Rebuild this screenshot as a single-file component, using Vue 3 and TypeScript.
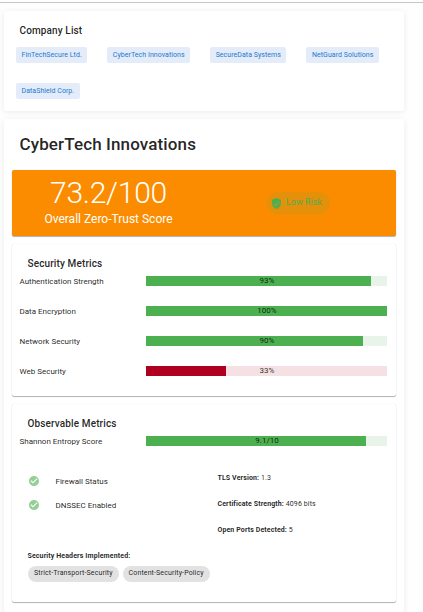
<script setup lang="ts">
interface Metric {
  label: string
  value: number
  text: string
  tone: 'good' | 'bad'
}

const companies: string[] = [
  'FinTechSecure Ltd.',
  'CyberTech Innovations',
  'SecureData Systems',
  'NetGuard Solutions',
  'DataShield Corp.',
]

const securityMetrics: Metric[] = [
  { label: 'Authentication Strength', value: 93.3, text: '93%', tone: 'good' },
  { label: 'Data Encryption', value: 100, text: '100%', tone: 'good' },
  { label: 'Network Security', value: 90, text: '90%', tone: 'good' },
  { label: 'Web Security', value: 33.2, text: '33%', tone: 'bad' },
]

const entropy: Metric = { label: 'Shannon Entropy Score', value: 91.3, text: '9.1/10', tone: 'good' }

const checks: string[] = ['Firewall Status', 'DNSSEC Enabled']

const facts = [
  { name: 'TLS Version:', value: '1.3' },
  { name: 'Certificate Strength:', value: '4096 bits' },
  { name: 'Open Ports Detected:', value: '5' },
]

const headers: string[] = ['Strict-Transport-Security', 'Content-Security-Policy']
</script>

<template>
  <div class="page">
    <div class="divider"></div>
    <section class="panel companies">
      <h2 class="card-title">Company List</h2>
      <div class="company-chips">
        <span v-for="c in companies" :key="c" class="company-chip">{{ c }}</span>
      </div>
    </section>

    <section class="panel detail">
      <h1 class="name">CyberTech Innovations</h1>

      <div class="card score">
        <div class="score-main">
          <div class="score-value">73.2/100</div>
          <div class="score-label">Overall Zero-Trust Score</div>
        </div>
        <div class="score-side">
          <span class="risk">
            <svg class="risk-icon" viewBox="3 1 18 22"><path fill="currentColor" d="M12 1L3 5v6c0 5.550 3.840 10.740 9 12 5.160-1.260 9-6.450 9-12V5l-9-4z" /><path class="risk-tick" d="M7.200 12.800l3 3 6.600-6.600" /></svg>
            <span class="risk-text">Low Risk</span>
          </span>
        </div>
      </div>

      <div class="card security">
        <h3 class="card-title inner">Security Metrics</h3>
        <div v-for="m in securityMetrics" :key="m.label" class="metric">
          <span class="metric-label">{{ m.label }}</span>
          <div class="bar" :class="m.tone">
            <div class="fill" :style="{ width: m.value + '%' }"></div>
            <span class="bar-text">{{ m.text }}</span>
          </div>
        </div>
      </div>

      <div class="card observable">
        <h3 class="card-title inner">Observable Metrics</h3>
        <div class="metric">
          <span class="metric-label">{{ entropy.label }}</span>
          <div class="bar" :class="entropy.tone">
            <div class="fill" :style="{ width: entropy.value + '%' }"></div>
            <span class="bar-text">{{ entropy.text }}</span>
          </div>
        </div>
        <div class="columns">
          <ul class="checks">
            <li v-for="c in checks" :key="c" class="check">
              <svg class="check-icon" viewBox="0 0 24 24"><path fill="currentColor" d="M12 2C6.5 2 2 6.5 2 12s4.5 10 10 10 10-4.500 10-10S17.500 2 12 2m-2 15l-5-5 1.410-1.410L10 14.170l7.590-7.590L19 8l-9 9z" /></svg>
              <span>{{ c }}</span>
            </li>
          </ul>
          <div class="facts">
            <div v-for="f in facts" :key="f.name" class="fact"><strong>{{ f.name }}</strong> {{ f.value }}</div>
          </div>
        </div>
        <div class="headers-title">Security Headers Implemented:</div>
        <div class="header-chips">
          <span v-for="h in headers" :key="h" class="header-chip">{{ h }}</span>
        </div>
      </div>
    </section>
  </div>
</template>

<style>
body {
  background: #fefefe;
  overflow: hidden;
}
</style>

<style scoped>
.page {
  box-sizing: border-box;
  width: 423px;
  height: 612px;
  overflow: hidden;
  padding-top: 2px;
  font-family: Roboto, sans-serif;
  color: rgba(0, 0, 0, 0.87);
}
h1, h2, h3, ul {
  margin: 0;
  padding: 0;
}
.divider {
  height: 1px;
  background: #c6c6c6;
}
.panel {
  box-sizing: border-box;
  width: 400px;
  margin: 8px 0 0 4px;
  background: #fff;
  border-radius: 2px;
  box-shadow: 0 1px 6px rgba(0, 0, 0, 0.08);
}
.companies {
  height: 100px;
  padding: 12px;
}
.card-title {
  font-size: 10px;
  line-height: 16px;
  font-weight: 500;
  letter-spacing: 0.125px;
}
.companies .card-title {
  padding-left: 3.5px;
}
.company-chips {
  display: flex;
  flex-wrap: wrap;
  gap: 20px;
  margin-top: 8px;
}
.company-chip {
  height: 16px;
  padding: 0 5.5px;
  border-radius: 2px;
  background: #e3ecf8;
  color: #2478d0;
  font-size: 7px;
  line-height: 16px;
  letter-spacing: 0.045px;
  white-space: nowrap;
}
.detail {
  height: 520px;
  padding: 8px;
}
.name {
  padding-left: 7.5px;
  font-size: 17px;
  line-height: 34px;
  font-weight: 500;
  letter-spacing: 0.125px;
}
.card {
  box-sizing: border-box;
  border-radius: 2px;
  background: #fff;
  box-shadow: 0 1px 1px rgba(0, 0, 0, 0.3), 0 0 1px rgba(0, 0, 0, 0.15);
}
.score {
  display: flex;
  height: 66px;
  margin-top: 9px;
  background: #fb8c00;
  color: #fff;
}
.score-main,
.score-side {
  flex: 1;
  text-align: center;
}
.score-value {
  padding: 8px 0 0 1px;
  font-size: 30px;
  line-height: 30px;
  font-weight: 300;
  letter-spacing: -0.25px;
}
.score-label {
  padding-left: 1px;
  font-size: 12px;
  line-height: 16px;
  margin-top: 3px;
}
.score-side {
  display: flex;
  align-items: center;
  justify-content: center;
}
.risk {
  display: flex;
  align-items: center;
  box-sizing: border-box;
  width: 63px;
  height: 22px;
  margin-right: 4px;
  padding-left: 5px;
  gap: 5.5px;
  border-radius: 11px;
  background: rgba(76, 175, 80, 0.12);
  color: #4caf50;
}
.risk-icon {
  width: 9px;
  height: 11px;
}
.risk-tick {
  fill: none;
  stroke: #e5900a;
  stroke-width: 2;
}
.risk-text {
  font-size: 9px;
  line-height: 20px;
  height: 22px;
}
.security {
  height: 152px;
  margin-top: 8px;
  padding: 12px 8px 0;
}
.inner {
  padding-left: 7.5px;
}
.metric {
  display: flex;
  align-items: center;
  height: 10px;
  padding: 4px 1px 16px 0;
}
.metric-label {
  width: 126.5px;
  margin-left: -0.5px;
  font-size: 8px;
  line-height: 10px;
  padding-top: 1px;
}
.bar {
  position: relative;
  flex: 1;
  height: 10px;
}
.good {
  background: #e8f4ea;
}
.bad {
  background: #f5e0e3;
}
.fill {
  height: 10px;
}
.good .fill {
  background: #4caf50;
}
.bad .fill {
  background: #b00020;
}
.bar-text {
  position: absolute;
  inset: 0;
  padding-left: 1px;
  text-align: center;
  font-size: 8px;
  line-height: 10px;
  color: rgba(0, 0, 0, 0.8);
}
.observable {
  height: 198px;
  margin-top: 8px;
  padding: 12px 8px 0;
}
.columns {
  display: grid;
  grid-template-columns: 190px 1fr;
  padding: 0 7.5px;
}
.checks {
  list-style: none;
  padding-top: 7px;
}
.check {
  display: flex;
  align-items: center;
  gap: 16px;
  height: 24px;
  font-size: 8px;
}
.check-icon {
  width: 12px;
  height: 12px;
  color: #94d096;
}
.facts {
  padding-top: 8px;
}
.fact {
  height: 26px;
  font-size: 7px;
  line-height: 16px;
  letter-spacing: 0.11px;
}
.headers-title {
  padding: 2px 0 0 7.5px;
  font-size: 7px;
  line-height: 12px;
  font-weight: 700;
  letter-spacing: 0.12px;
}
.header-chips {
  display: flex;
  gap: 4px;
  padding: 4px 8px;
}
.header-chip {
  height: 16px;
  padding: 0 6px;
  border-radius: 8px;
  background: #e2e2e2;
  font-size: 7px;
  line-height: 14px;
  letter-spacing: 0.12px;
  white-space: nowrap;
}
</style>
